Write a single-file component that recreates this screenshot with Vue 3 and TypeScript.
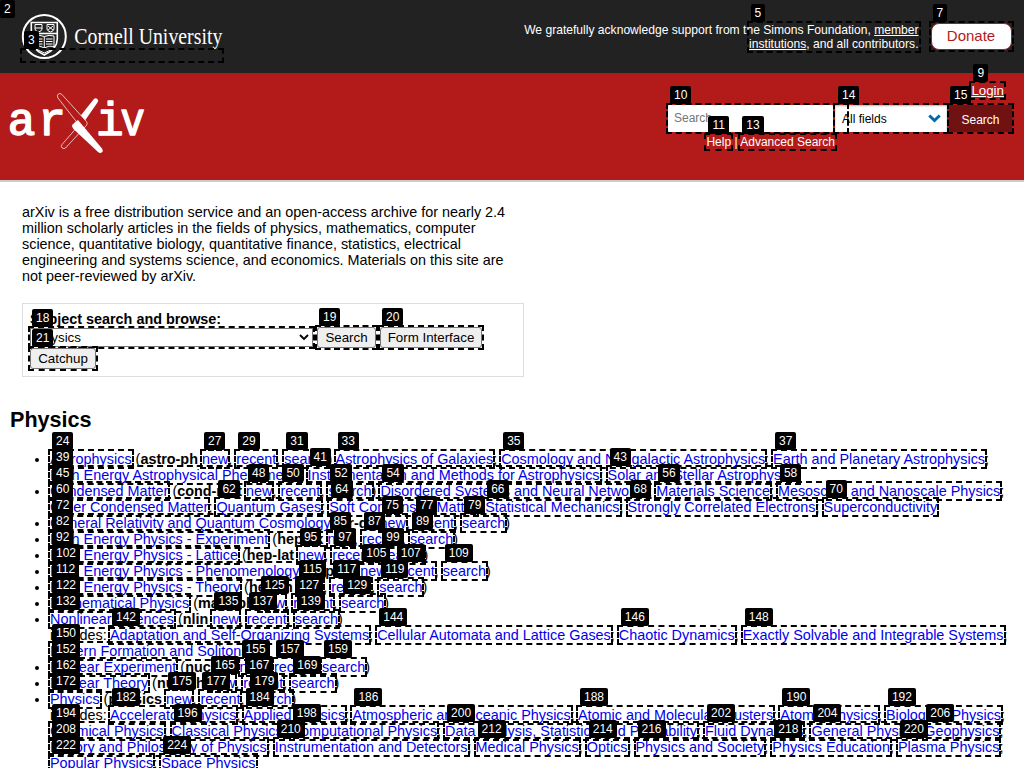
<script setup lang="ts">
interface Item {
  pre?: string
  code?: string
  text: string
  tag: number
  post?: string
}
interface Row {
  bullet?: boolean
  items: Item[]
}

function archive(name: string, code: string, tag: number, first: number, extra: Item[] = []): Row {
  return {
    bullet: true,
    items: [
      { text: name, tag, post: ' (' },
      { code, text: 'new', tag: first, post: ', ' },
      { text: 'recent', tag: first + 2, post: ', ' },
      { text: 'search', tag: first + 4, post: extra.length ? ') ' : ')' },
      ...extra,
    ],
  }
}

function topics(names: string[], tag: number, pre = '', open = false): Item[] {
  return names.map((text, i) => ({
    pre: i === 0 ? pre : '',
    text,
    tag: tag + i * 2,
    post: i < names.length - 1 || open ? '; ' : '',
  }))
}

const rows: Row[] = [
  archive('Astrophysics', 'astro-ph', 24, 27,
    topics(['Astrophysics of Galaxies', 'Cosmology and Nongalactic Astrophysics', 'Earth and Planetary Astrophysics'], 33, '', true)),
  { items: topics(['High Energy Astrophysical Phenomena', 'Instrumentation and Methods for Astrophysics', 'Solar and Stellar Astrophysics'], 39) },
  archive('Condensed Matter', 'cond-mat', 45, 48,
    topics(['Disordered Systems and Neural Networks', 'Materials Science', 'Mesoscale and Nanoscale Physics'], 54, '', true)),
  { items: topics(['Other Condensed Matter', 'Quantum Gases', 'Soft Condensed Matter', 'Statistical Mechanics', 'Strongly Correlated Electrons', 'Superconductivity'], 60) },
  archive('General Relativity and Quantum Cosmology', 'gr-qc', 72, 75),
  archive('High Energy Physics - Experiment', 'hep-ex', 82, 85),
  archive('High Energy Physics - Lattice', 'hep-lat', 92, 95),
  archive('High Energy Physics - Phenomenology', 'hep-ph', 102, 105),
  archive('High Energy Physics - Theory', 'hep-th', 112, 115),
  archive('Mathematical Physics', 'math-ph', 122, 125),
  archive('Nonlinear Sciences', 'nlin', 132, 135),
  { items: topics(['Adaptation and Self-Organizing Systems', 'Cellular Automata and Lattice Gases', 'Chaotic Dynamics', 'Exactly Solvable and Integrable Systems'], 142, 'includes: ', true) },
  { items: topics(['Pattern Formation and Solitons'], 150) },
  archive('Nuclear Experiment', 'nucl-ex', 152, 155),
  archive('Nuclear Theory', 'nucl-th', 162, 165),
  archive('Physics', 'physics', 172, 175),
  { items: topics(['Accelerator Physics', 'Applied Physics', 'Atmospheric and Oceanic Physics', 'Atomic and Molecular Clusters', 'Atomic Physics', 'Biological Physics'], 182, 'includes: ', true) },
  { items: topics(['Chemical Physics', 'Classical Physics', 'Computational Physics', 'Data Analysis, Statistics and Probability', 'Fluid Dynamics', 'General Physics', 'Geophysics'], 194, '', true) },
  { items: topics(['History and Philosophy of Physics', 'Instrumentation and Detectors', 'Medical Physics', 'Optics', 'Physics and Society', 'Physics Education', 'Plasma Physics'], 208, '', true) },
  { items: topics(['Popular Physics', 'Space Physics'], 222) },
]
</script>

<template>
  <div class="page">
    <span class="tag corner">2</span>
    <header class="top">
      <div class="cornell">
        <svg width="202" height="48" viewBox="0 0 202 48">
          <g fill="none" stroke="#fff">
            <circle cx="22.3" cy="24.5" r="21.5" stroke-width="2" />
            <path d="M9.3 10.5H35.3V27Q35.3 37 22.3 43Q9.3 37 9.3 27Z" stroke-width="1.6" />
            <path d="M9 21.5H35.6" stroke-width="1.6" />
            <path d="M13 12.5H20V17Q20 19 16.5 20Q13 19 13 17ZM25 12.5H32V17Q32 19 28.5 20Q25 19 25 17ZM13 16H20M26 14L31 18M31 14L26 18" />
            <path d="M22.3 24.5Q18 22.5 13 24V34.5Q18 33 22.3 36Q27 33 32 34.5V24Q27 22.5 22.3 24.5V36M14.5 27H20.5M24 27H30.5M14.5 29.5H20.5M24 29.5H30.5M14.5 32H20.5M24 32H30.5" />
            <path d="M13 36.5L22.3 41L32 36.5" />
          </g>
          <text x="52.3" y="31.5" textLength="148" lengthAdjust="spacingAndGlyphs" class="word">Cornell University</text>
        </svg>
        <span class="strip mark"><span class="tag">3</span></span>
      </div>
      <div class="support">
        <p>We gratefully acknowledge support from the Simons Foundation, <u>member</u><br><u>institutions</u>, and all contributors.</p>
        <span class="members mark"><span class="tag">5</span></span>
      </div>
      <a class="donate mark">Donate<span class="tag">7</span></a>
    </header>

    <div class="banner">
      <svg class="logo" width="140" height="66" viewBox="0 0 140 66">
        <g class="letters">
          <text x="-2.3" y="44.3">a</text>
          <text x="28.2" y="44.3">r</text>
          <text x="86" y="44.3">i</text>
          <text transform="translate(110.6 44.3) scale(.88 1)">v</text>
        </g>
        <path d="M70 25.5L83.5 8.5Q85.5 6.4 87.3 8Q89 9.5 87.5 11.5L75 29.5Z" fill="#fff" />
        <path d="M48 7Q46.5 4.5 48.3 3Q50 1.6 52 3.6L76.5 30.6Q78 32.4 76.5 34.4L55.5 57Q54 58.3 52.2 57Q50.5 55.7 52 53.5L69 34Z" fill="#b31b1b" stroke="#fff" stroke-width=".7" stroke-linejoin="round" />
        <path d="M68 29Q62.5 33 62 34.5Q62 36 63.5 38L88 61Q90.2 62.8 92 61.3Q93.5 59.7 92 57.5Z" fill="#fff" />
      </svg>
      <div class="tools">
        <a class="login mark"><u>Login</u><span class="tag">9</span></a>
        <form class="find" @submit.prevent>
          <div class="query">Search...<span class="reach mark"><span class="tag">10</span></span></div>
          <div class="fields mark">All fields
            <svg width="13" height="9" viewBox="0 0 13 9"><path d="M1.3 1.5L6.5 6.5L11.7 1.5" fill="none" stroke="#0068ac" stroke-width="3" /></svg>
            <span class="tag">14</span>
          </div>
          <button class="go mark">Search<span class="tag">15</span></button>
        </form>
        <div class="help"><a class="mark">Help<span class="tag">11</span></a> | <a class="mark">Advanced Search<span class="tag">13</span></a></div>
      </div>
    </div>

    <main>
      <p class="intro">arXiv is a free distribution service and an open-access archive for nearly 2.4 million scholarly articles in the fields of physics, mathematics, computer science, quantitative biology, quantitative finance, statistics, electrical engineering and systems science, and economics. Materials on this site are not peer-reviewed by arXiv.</p>
      <section class="browse">
        <b>Subject search and browse:</b>
        <div class="line">
          <div class="subject mark">Physics
            <svg width="10" height="7" viewBox="0 0 10 7"><path d="M1 1L5 5L9 1" fill="none" stroke="#000" stroke-width="1.9" /></svg>
            <span class="tag">18</span>
          </div>
          <button class="btn b1 mark">Search<span class="tag">19</span></button>
          <button class="btn b2 mark">Form Interface<span class="tag">20</span></button>
        </div>
        <button class="btn b3 mark">Catchup<span class="tag">21</span></button>
      </section>

      <h2>Physics</h2>
      <div class="list">
        <div v-for="(row, r) in rows" :key="r" class="row" :class="{ bullet: row.bullet }"><template v-for="it in row.items" :key="it.tag">{{ it.pre }}<template v-if="it.code"><b>{{ it.code }}</b>{{ ' ' }}</template><a class="mark">{{ it.text }}<span class="tag">{{ it.tag }}</span></a>{{ it.post }}</template></div>
      </div>
    </main>
  </div>
</template>

<style>
html, body { overflow: hidden; }
</style>

<style scoped>
.page {
  position: relative;
  height: 768px;
  overflow: hidden;
  background: #fff;
  color: #000;
  font: 14.4px/16px "Liberation Sans", Arial, sans-serif;
}
.page *, .mark::after { box-sizing: border-box; }
p, h2 { margin: 0; }
.mark { position: relative; }
.mark::after {
  content: "";
  position: absolute;
  inset: -2px;
  border: 2px dashed #000;
  pointer-events: none;
}
.tag {
  position: absolute;
  left: 2px;
  top: -19px;
  z-index: 5;
  height: 18px;
  padding: 2px 4px;
  border-radius: 2px;
  background: #000;
  color: #fff;
  font: 400 12px/14px "Liberation Sans", Arial, sans-serif;
  white-space: nowrap;
}
.corner { left: 0; top: 0; }

.top {
  display: flex;
  align-items: flex-start;
  height: 73px;
  padding: 0 12.5px 0 22px;
  background: #222;
  color: #fff;
}
.cornell { position: relative; padding-top: 12px; height: 73px; }
.cornell svg { display: block; overflow: visible; }
.word { font: 22.5px "Liberation Serif", serif; fill: #fff; }
.strip.mark { position: absolute; left: 0; top: 50px; width: 200px; height: 11px; }
.support {
  position: relative;
  margin: 23px 12px 0 auto;
  font-size: 12.1px;
  line-height: 14px;
  text-align: right;
  white-space: nowrap;
}
.members.mark { position: absolute; right: 0; top: 0; width: 170px; height: 28px; }
.donate {
  width: 81px;
  height: 27px;
  margin-top: 23px;
  border: 1px solid #b31b1b;
  border-radius: 8px;
  background: #fff;
  color: #b31b1b;
  font-size: 15px;
  line-height: 24px;
  text-align: center;
}

.banner {
  display: flex;
  justify-content: space-between;
  height: 109px;
  padding: 0 12px 0 10px;
  border-bottom: 2px solid #ccc;
  background: #b31b1b;
  color: #fff;
}
.logo { margin-top: 18px; overflow: visible; }
.letters {
  font: 400 46px "Liberation Mono", monospace;
  fill: #fff;
  stroke: #fff;
  stroke-width: 1.5px;
  stroke-linejoin: round;
}
.tools { display: flex; flex-direction: column; width: 344px; padding-top: 10px; }
.login {
  align-self: flex-end;
  height: 15px;
  margin-right: 8px;
  font-size: 13.33px;
  line-height: 15px;
}
.find { display: flex; height: 27px; margin: 7px 0 3px; font-size: 12px; line-height: 26px; }
.query { position: relative; width: 165px; margin-right: 2px; padding-left: 6px; border-radius: 1px; background: #fff; color: #757575; }
.reach.mark { position: absolute; left: 0; top: 0; width: 179px; height: 27px; z-index: 2; }
.fields {
  display: flex;
  justify-content: space-between;
  align-items: center;
  width: 112px;
  padding: 0 6px 0 7px;
  background: #fff;
  box-shadow: inset 0 1px 2px rgba(0, 0, 0, .3);
  color: #000;
  line-height: 24px;
}
.fields .tag { left: 3px; }
.go {
  width: 63px;
  margin-left: 2px;
  padding: 3px 0 0;
  border: 0;
  background: #701112;
  color: #fff;
  font: 12px/24px "Liberation Sans", Arial, sans-serif;
}
.go .tag { left: 1px; }
.help { width: 167px; font-size: 12px; line-height: 14px; text-align: right; white-space: nowrap; }

main { padding: 22px 10px 0; }
.intro { width: 492px; margin-left: 12px; }
.browse {
  width: 502px;
  height: 74px;
  margin: 19px 0 0 12px;
  padding: 7px;
  border: 1px solid #ddd;
}
.browse b { display: block; height: 16px; }
.line { display: flex; }
.subject {
  display: flex;
  justify-content: space-between;
  align-items: center;
  width: 283px;
  height: 19px;
  margin-top: 1px;
  padding: 0 3px 0 4px;
  border: 1px solid #767676;
  background: #fff;
  font-size: 13.33px;
}
.btn {
  display: block;
  height: 21px;
  padding: 0;
  border: 1px solid #767676;
  border-radius: 3px;
  background: #efefef;
  color: #000;
  font: 13.33px/19px "Liberation Sans", Arial, sans-serif;
}
.btn .tag, .subject .tag { left: 1px; top: -20px; }
.btn::after, .subject::after, .donate::after { inset: -3px; }
.donate .tag { left: 1px; top: -20px; }
.b1 { width: 59px; margin-left: 4px; }
.b2 { width: 102px; margin-left: 4px; }
.b3 { width: 66px; }
h2 { margin-top: 31px; font-size: 21.6px; line-height: 24px; }
.list { margin-top: 19px; padding-left: 40px; }
.row { position: relative; height: 16px; white-space: nowrap; }
.row a { color: #00e; }
.bullet::before {
  content: "";
  position: absolute;
  left: -15px;
  top: 7px;
  width: 4px;
  height: 4px;
  border-radius: 50%;
  background: #000;
}
</style>
